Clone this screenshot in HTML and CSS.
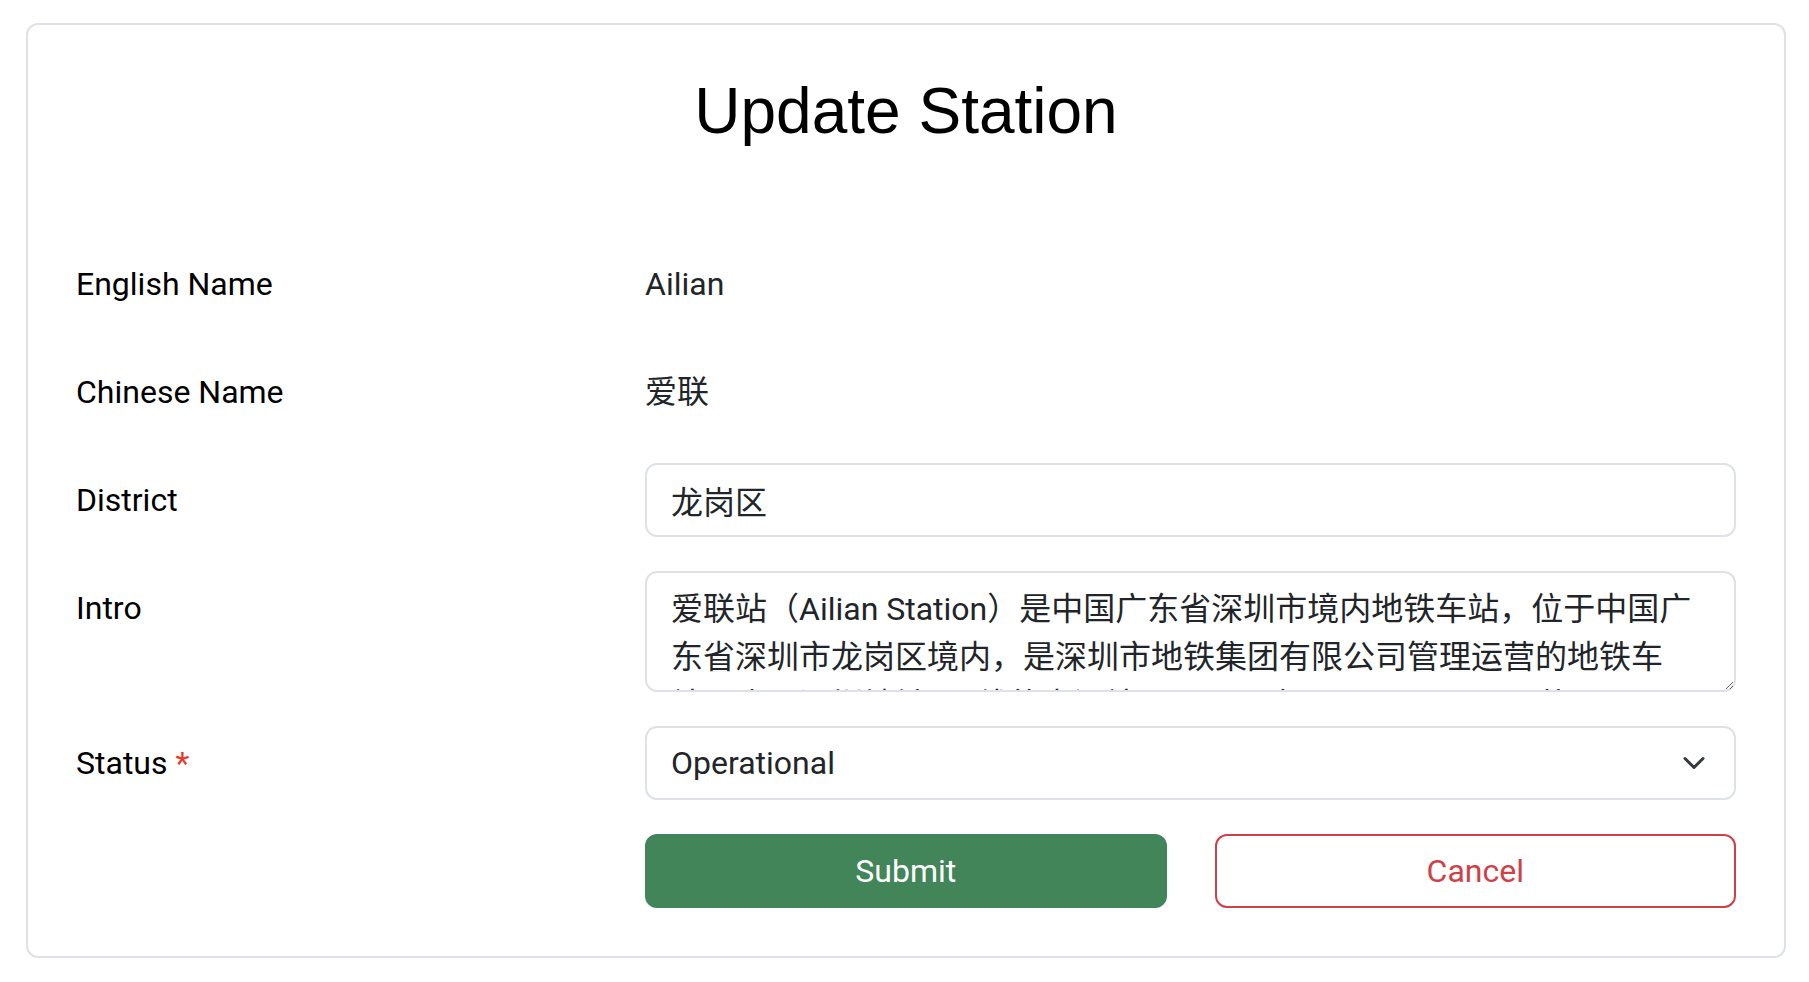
FILE: index.html
```html
<!DOCTYPE html>
<html lang="en">
<head>
<meta charset="utf-8">
<title>Update Station</title>
<link rel="stylesheet" href="styles.css">
</head>
<body>
<div class="page">
  <div class="card">
    <h1 class="title">Update Station</h1>
    <form class="form">
      <div class="row">
        <label class="label">English Name</label>
        <div class="plain">Ailian</div>
      </div>
      <div class="row">
        <label class="label">Chinese Name</label>
        <div class="plain">爱联</div>
      </div>
      <div class="row">
        <label class="label" for="district">District</label>
        <input class="control" id="district" type="text" value="龙岗区">
      </div>
      <div class="row">
        <label class="label" for="intro">Intro</label>
        <textarea class="control area" id="intro">爱联站（Ailian Station）是中国广东省深圳市境内地铁车站，位于中国广东省深圳市龙岗区境内，是深圳市地铁集团有限公司管理运营的地铁车站，也是深圳地铁3号线的中间站，于2010年12月28日开通运营。</textarea>
      </div>
      <div class="row">
        <label class="label">Status <span class="req">*</span></label>
        <div class="control select">
          <span>Operational</span>
          <svg class="chev" width="32" height="24" viewBox="0 0 16 16" aria-hidden="true"><path d="M2 5l6 6 6-6" fill="none" stroke="#343a40" stroke-width="2" stroke-linecap="round" stroke-linejoin="round"/></svg>
        </div>
      </div>
      <div class="row">
        <div></div>
        <div class="buttons">
          <button type="button" class="btn submit">Submit</button>
          <button type="button" class="btn cancel">Cancel</button>
        </div>
      </div>
    </form>
  </div>
</div>
</body>
</html>
```

FILE: styles.css
```css
* { box-sizing: border-box; }

body {
  margin: 0;
  background: #ffffff;
  font-family: Roboto, "Noto Sans CJK SC", sans-serif;
  color: #000000;
}

.page {
  padding: 23px 23px 23px 26px;
}

.card {
  border: 2px solid #dee2e6;
  border-radius: 12px;
  padding: 48px;
}

.title {
  margin: 0 0 97px;
  font-family: "Liberation Sans", Arial, sans-serif;
  font-weight: 400;
  font-size: 64px;
  line-height: 1.2;
  text-align: center;
  color: #000000;
}

.form {
  display: grid;
  row-gap: 34px;
}

.row {
  display: grid;
  grid-template-columns: 521px 1fr;
  column-gap: 48px;
  align-items: start;
}

.label {
  display: block;
  padding: 13px 0;
  font-size: 32px;
  line-height: 48px;
  color: #000000;
}

.req {
  color: #e8392c;
}

.plain {
  padding: 13px 0;
  font-size: 32px;
  line-height: 48px;
  color: #212529;
}

.control {
  display: block;
  width: 100%;
  height: 74px;
  margin: 0;
  padding: 0 24px;
  border: 2px solid #dee2e6;
  border-radius: 12px;
  background: #ffffff;
  font-family: Roboto, "Noto Sans CJK SC", sans-serif;
  font-size: 32px;
  line-height: 48px;
  color: #212529;
  outline: none;
}

.area {
  height: 121px;
  padding: 12px 24px;
  resize: vertical;
  overflow: hidden;
}

.select {
  display: flex;
  align-items: center;
  justify-content: space-between;
}

.chev {
  flex: none;
}

.buttons {
  display: grid;
  grid-template-columns: 1fr 1fr;
  column-gap: 48px;
}

.btn {
  height: 74px;
  border-radius: 12px;
  font-family: Roboto, "Noto Sans CJK SC", sans-serif;
  font-size: 32px;
  line-height: 48px;
  padding: 0 24px;
  cursor: pointer;
}

.submit {
  background: #418559;
  border: 2px solid #418559;
  color: #ffffff;
}

.cancel {
  background: #ffffff;
  border: 2px solid #cf4148;
  color: #cf4148;
}
```
